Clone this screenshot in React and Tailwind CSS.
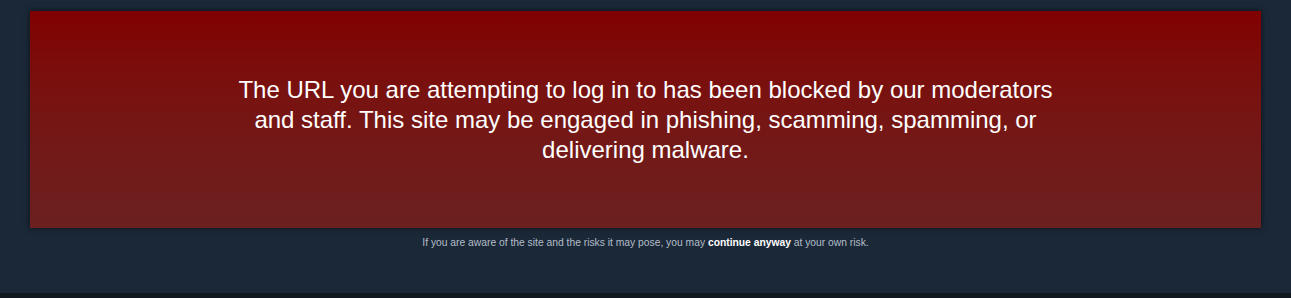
import React from "react";

export default function App() {
  return (
    <div
      className="w-[1291px] h-[298px] bg-[#1b2838] flex flex-col"
      style={{ fontFamily: '"Liberation Sans", Arial, sans-serif' }}
    >
      <div className="flex-1 px-[30px] pt-[11px]">
        {/* blocked warning panel */}
        <div className="h-[217px] flex items-center justify-center bg-gradient-to-b from-[#800000] to-[#6b2020] shadow-[0_0_6px_rgba(0,0,0,0.6)]">
          <p className="max-w-[830px] text-center text-white text-[24px] leading-[30px]">
            The URL you are attempting to log in to has been blocked by our moderators and staff. This site may be engaged in phishing, scamming, spamming, or delivering malware.
          </p>
        </div>
        <p className="mt-[7px] text-center text-[10.3px] text-[#b4bec8]">
          If you are aware of the site and the risks it may pose, you may{" "}
          <a className="text-white font-bold cursor-pointer">continue anyway</a> at your own risk.
        </p>
      </div>
      <div className="h-[5px] bg-[#111820]" />
    </div>
  );
}
